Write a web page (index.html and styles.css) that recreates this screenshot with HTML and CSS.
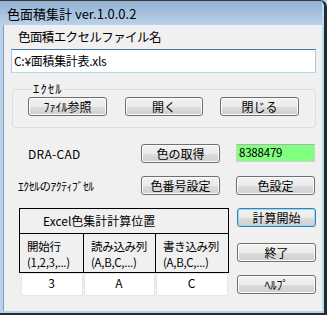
FILE: index.html
```html
<!DOCTYPE html>
<html lang="ja">
<head>
<meta charset="utf-8">
<title>色面積集計</title>
<link rel="stylesheet" href="styles.css">
</head>
<body>
<div class="window">
  <div class="titlebar"><span class="title">色面積集計 ver.1.0.0.2</span></div>
  <div class="client">
    <div class="file-label">色面積エクセルファイル名</div>
    <div class="textbox path">C:¥面積集計表.xls</div>

    <fieldset class="group">
      <legend>ｴｸｾﾙ</legend>
      <div class="group-buttons">
        <button class="btn">ﾌｧｲﾙ参照</button>
        <button class="btn w78">開く</button>
        <button class="btn">閉じる</button>
      </div>
    </fieldset>

    <div class="row cad">
      <span class="lbl lbl-cad">DRA-CAD</span>
      <button class="btn">色の取得</button>
      <div class="colorval">8388479</div>
    </div>

    <div class="row active">
      <span class="lbl lbl-active">ｴｸｾﾙのｱｸﾃｨﾌﾞｾﾙ</span>
      <button class="btn">色番号設定</button>
      <button class="btn">色設定</button>
    </div>

    <div class="bottom">
      <table class="calc">
        <colgroup><col class="c1"><col class="c2"><col class="c3"></colgroup>
        <tr class="cap"><th colspan="3">Excel色集計計算位置</th></tr>
        <tr class="heads">
          <td><span class="l">開始行</span><span class="l">(1,2,3,...)</span></td>
          <td><span class="l">読み込み列</span><span class="l">(A,B,C,...)</span></td>
          <td><span class="l">書き込み列</span><span class="l">(A,B,C,...)</span></td>
        </tr>
        <tr class="inputs">
          <td><div class="cell-input">3</div></td>
          <td><div class="cell-input">A</div></td>
          <td><div class="cell-input">C</div></td>
        </tr>
      </table>
      <div class="side">
        <button class="btn default">計算開始</button>
        <button class="btn side-end">終了</button>
        <button class="btn side-help">ﾍﾙﾌﾟ</button>
      </div>
    </div>
  </div>
</div>
</body>
</html>
```

FILE: styles.css
```css
html, body {
  margin: 0;
  padding: 0;
  background: #b9d1ea;
}
body {
  font-family: "Noto Sans CJK JP", "Noto Sans", sans-serif;
  font-size: 12px;
  color: #000;
}
.window {
  width: 327px;
  height: 315px;
  box-sizing: border-box;
  background: #b9d1ea;
  border-top: 1px solid #3a3a3a;
  border-right: 3px solid #252b30;
  border-bottom: 2px solid #252b30;
  border-top-right-radius: 7px;
  display: flex;
  flex-direction: column;
  overflow: hidden;
}
.titlebar {
  height: 24px;
  flex: none;
  background: linear-gradient(#94b1d2, #b9d1ea);
  display: flex;
  align-items: center;
  padding-left: 7px;
  border-right: 2px solid #b4def2;
}
.title {
  font-size: 13px;
  line-height: 16px;
  color: #000;
  margin-top: 2px;
}
.client {
  flex: 1;
  margin-left: 3px;
  margin-bottom: 2px;
  background: #f0f0f0;
  border-left: 1px solid #7d9cc0;
  border-right: 2px solid #b4def2;
  display: flex;
  flex-direction: column;
}
.file-label {
  margin-top: 5px;
  margin-left: 14px;
  line-height: 14px;
  font-size: 12.5px;
  letter-spacing: -0.6px;
}
.textbox {
  box-sizing: border-box;
  background: #fff;
  border: 1px solid #b7d9ed;
  border-top-color: #3d7bad;
  border-left-color: #a4c9e3;
  border-right-color: #a4c9e3;
}
.path {
  margin-top: 5px;
  margin-left: 7px;
  width: 305px;
  height: 24px;
  padding: 2px 2px;
  line-height: 18px;
  font-size: 12px;
  letter-spacing: -0.3px;
}
.group {
  margin: 9px 0 0 8px;
  width: 304px;
  box-sizing: border-box;
  border: 1px solid #d5dfe5;
  border-radius: 3px;
  padding: 1px 0 11px 15px;
  min-width: 0;
}
.group legend {
  padding: 0 1px;
  margin-left: 4px;
  line-height: 14px;
  font-size: 12.5px;
  letter-spacing: 1.2px;
}
.group-buttons {
  display: flex;
}
.group-buttons .btn + .btn {
  margin-left: 17px;
}
.btn {
  width: 79px;
  height: 19px;
  box-sizing: border-box;
  border: 1px solid #707070;
  border-radius: 3px;
  background: linear-gradient(#f2f2f2 0%, #ebebeb 50%, #dddddd 51%, #cfcfcf 100%);
  box-shadow: inset 0 0 0 1px #fbfbfb;
  font-family: "Noto Sans CJK JP", sans-serif;
  font-size: 12px;
  line-height: 15px;
  padding: 0;
  color: #000;
  flex: none;
}
.btn.w78 {
  width: 78px;
  margin-left: 18px !important;
}
.btn.default {
  border-color: #3c7fb1;
  box-shadow: inset 0 0 0 1px #8fdcf8;
}
.row {
  display: flex;
  align-items: center;
  height: 19px;
}
.cad {
  margin-top: 16px;
}
.active {
  margin-top: 13px;
}
.lbl {
  flex: none;
  line-height: 14px;
}
.lbl-cad {
  margin-left: 24px;
  width: 113px;
  font-size: 12px;
  letter-spacing: 0.3px;
}
.lbl-active {
  margin-left: 14px;
  width: 123px;
  font-size: 11.5px;
  letter-spacing: -0.4px;
}
.colorval {
  margin-left: 16px;
  width: 79px;
  height: 18px;
  box-sizing: border-box;
  background: #80ff80;
  border: 1px solid #c9d6c9;
  border-top-color: #a9b3a9;
  padding-left: 2px;
  font-size: 11.5px;
  line-height: 15px;
  align-self: flex-start;
  letter-spacing: -0.2px;
}
.active .btn + .btn {
  margin-left: 16px;
}
.bottom {
  margin-top: 13px;
  display: flex;
  align-items: flex-start;
}
.calc {
  margin-left: 15px;
  border-collapse: collapse;
  table-layout: fixed;
  width: 209px;
  font-size: 12px;
}
.calc col.c1 { width: 64px; }
.calc col.c2 { width: 72px; }
.calc col.c3 { width: 73px; }
.calc th, .calc .heads td {
  border: 1px solid #000;
}
.cap th {
  height: 24px;
  padding: 0 0 0 23px;
  font-weight: normal;
  text-align: left;
  line-height: 14px;
}
.heads td {
  height: 37px;
  padding: 1px 0 0 7px;
  vertical-align: middle;
  white-space: nowrap;
  letter-spacing: -0.3px;
  font-size: 11.5px;
}
.heads .l {
  display: block;
  line-height: 16px;
}
.inputs td {
  padding: 0 1px 0 0;
  border: none;
}
.inputs td:first-child {
  padding-left: 1px;
}
.cell-input {
  height: 23px;
  box-sizing: border-box;
  background: #fff;
  border: 1px solid #e6e6e6;
  border-radius: 2px;
  text-align: center;
  line-height: 18px;
  font-size: 12px;
}
.side {
  margin-left: 8px;
  display: flex;
  flex-direction: column;
}
.side-end {
  margin-top: 16px;
}
.side-help {
  margin-top: 13px;
}
```
